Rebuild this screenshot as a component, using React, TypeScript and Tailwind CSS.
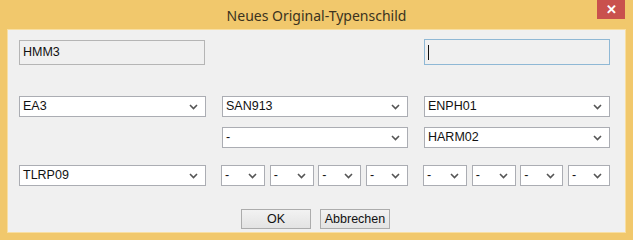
// Dialog: "Neues Original-Typenschild" nameplate picker

type ComboProps = {
	value: string;
	width: string;
};

function Chevron() {
	return (
		<svg width="9" height="6" viewBox="0 0 9 6" className="shrink-0">
			<path d="M1 1 L4.5 4.5 L8 1" fill="none" stroke="#555" strokeWidth="1.6" />
		</svg>
	);
}

function Combo({ value, width }: ComboProps) {
	return (
		<div
			className={`${width} h-[21px] flex items-center justify-between bg-white border border-[#abadb3] pl-[3px] pr-[7px] text-[12.5px] text-[#111] leading-none`}
		>
			<span>{value}</span>
			<Chevron />
		</div>
	);
}

function SmallCombos() {
	return (
		<div className="w-[187px] flex justify-between">
			<Combo value="-" width="w-[44px]" />
			<Combo value="-" width="w-[44px]" />
			<Combo value="-" width="w-[43px]" />
			<Combo value="-" width="w-[42px]" />
		</div>
	);
}

export default function App() {
	return (
		<div
			className="w-[633px] h-[240px] bg-[#f1c86c] flex flex-col"
			style={{ fontFamily: '"Liberation Sans", Arial, sans-serif' }}
		>
			{/* Title bar */}
			<div className="relative h-[29px] flex items-center justify-center">
				<span
					className="text-[14px] text-[#3b3320] pt-[1px]"
					style={{ fontFamily: '"Noto Sans", "Open Sans", sans-serif' }}
				>
					Neues Original-Typenschild
				</span>
				<div className="absolute right-[8px] top-0 w-[28px] h-[19px] bg-[#c9514d] flex items-center justify-center text-white text-[13px] font-bold">
					✕
				</div>
			</div>

			{/* Client area */}
			<div className="mx-[7px] mb-[7px] flex-1 border border-[#f8dfa3] bg-[#f0f0f0] pl-[11px] pr-[15px] pt-[9px]">
				{/* Top row */}
				<div className="flex justify-between items-start">
					<div className="w-[186px] h-[25px] mt-[1px] border border-[#b5b5b5] bg-[#f0f0f0] flex items-center pl-[3px] text-[12.5px] text-[#111]">
						HMM3
					</div>
					<div className="w-[186px] h-[26px] border border-[#8fb8d5] bg-[#f0f0f0] flex items-center pl-[3px]">
						<div className="w-[1px] h-[15px] bg-[#111]" />
					</div>
				</div>

				{/* Row 1 */}
				<div className="flex justify-between mt-[31px]">
					<Combo value="EA3" width="w-[187px]" />
					<Combo value="SAN913" width="w-[186px]" />
					<Combo value="ENPH01" width="w-[186px]" />
				</div>

				{/* Row 2 */}
				<div className="flex justify-between mt-[10px]">
					<div className="w-[187px]" />
					<Combo value="-" width="w-[186px]" />
					<Combo value="HARM02" width="w-[186px]" />
				</div>

				{/* Row 3 */}
				<div className="flex justify-between mt-[17px]">
					<Combo value="TLRP09" width="w-[187px]" />
					<SmallCombos />
					<SmallCombos />
				</div>

				{/* Buttons */}
				<div className="flex justify-center gap-[9px] mt-[23px] pl-[2px]">
					<button
						type="button"
						className="w-[70px] h-[20px] border border-[#acacac] bg-gradient-to-b from-[#f2f2f2] to-[#e3e3e3] text-[12.5px] text-[#111] leading-none"
					>
						OK
					</button>
					<button
						type="button"
						className="w-[70px] h-[20px] border border-[#acacac] bg-gradient-to-b from-[#f2f2f2] to-[#e3e3e3] text-[12.5px] text-[#111] leading-none"
					>
						Abbrechen
					</button>
				</div>
			</div>
		</div>
	);
}
